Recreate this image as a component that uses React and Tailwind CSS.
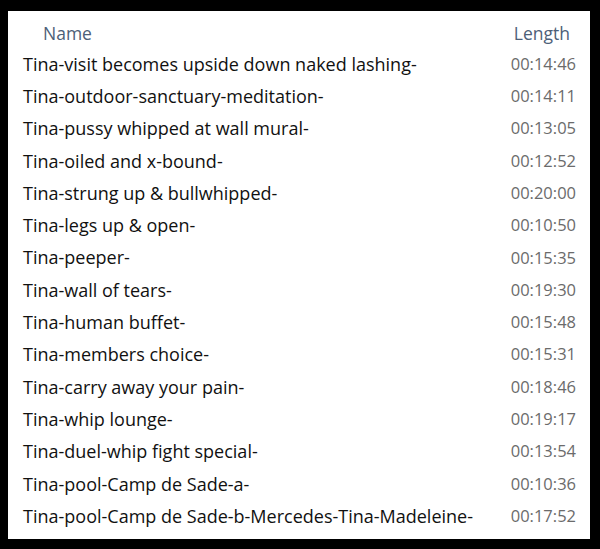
import React from "react";

const rows = [
  ["Tina-visit becomes upside down naked lashing-", "00:14:46"],
  ["Tina-outdoor-sanctuary-meditation-", "00:14:11"],
  ["Tina-pussy whipped at wall mural-", "00:13:05"],
  ["Tina-oiled and x-bound-", "00:12:52"],
  ["Tina-strung up & bullwhipped-", "00:20:00"],
  ["Tina-legs up & open-", "00:10:50"],
  ["Tina-peeper-", "00:15:35"],
  ["Tina-wall of tears-", "00:19:30"],
  ["Tina-human buffet-", "00:15:48"],
  ["Tina-members choice-", "00:15:31"],
  ["Tina-carry away your pain-", "00:18:46"],
  ["Tina-whip lounge-", "00:19:17"],
  ["Tina-duel-whip fight special-", "00:13:54"],
  ["Tina-pool-Camp de Sade-a-", "00:10:36"],
  ["Tina-pool-Camp de Sade-b-Mercedes-Tina-Madeleine-", "00:17:52"],
];

export default function App() {
  return (
    <div className="w-[600px] h-[549px] bg-black pt-[11px] pl-[8px] pr-[10px] pb-[10px] font-['Open_Sans',sans-serif]">
      <div className="bg-white h-full w-full">
        <div className="flex justify-between items-center h-[37px] pt-[8px] pl-[35px] pr-[20px] text-[17.5px] text-[#4d6078]">
          <span>Name</span>
          <span>Length</span>
        </div>
        {rows.map(([name, len], i) => (
          <div key={i} className="flex justify-between items-center h-[32.3px] pl-[15px] pr-[14px]">
            <span className="text-[18px] text-[#111]">{name}</span>
            <span className="text-[16.5px] text-[#6b6b6b]">{len}</span>
          </div>
        ))}
      </div>
    </div>
  );
}
